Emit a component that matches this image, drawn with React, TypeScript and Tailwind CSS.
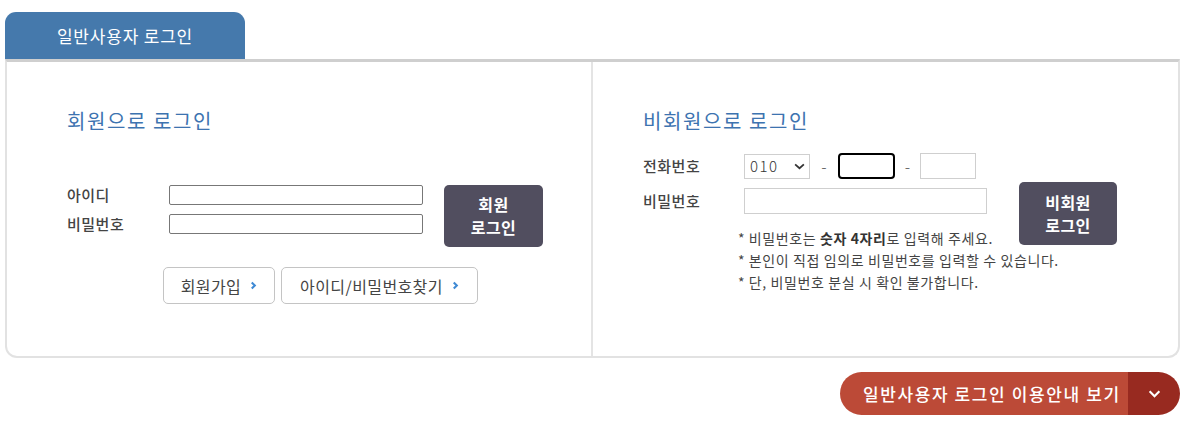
import { useState } from 'react';

const font = { fontFamily: '"Noto Sans CJK KR", "Noto Sans", sans-serif' };

function Chevron({ className }: { className?: string }) {
  return (
    <svg viewBox="0 0 8 10" className={className} fill="none" stroke="currentColor" strokeWidth="2.4">
      <path d="M2 1.5 L5.5 5 L2 8.5" />
    </svg>
  );
}

export default function App() {
  const [아이디, set아이디] = useState('');
  const [비번, set비번] = useState('');

  return (
    <div className="w-[1189px] h-[425px] bg-white pt-[12px] pl-[5px] text-[#333]" style={font}>
      <div className="w-[1175px]">
        {/* 탭 */}
        <div className="w-[240px] h-[47px] bg-[#4579ac] rounded-t-[11px] flex items-center justify-center text-white text-[17px] tracking-[0.8px]">
          일반사용자 로그인
        </div>

        <div className="flex h-[299px] border-t-[3px] border-t-[#cfcfcf] border-x-2 border-b-2 border-x-[#e2e2e2] border-b-[#e2e2e2] rounded-b-[12px]">
          {/* 회원 로그인 */}
          <div className="w-[586px] border-r-2 border-[#e4e4e4] pl-[60px] pt-[45px]">
            <h2 className="text-[20px] leading-[28px] text-[#3d73b0] tracking-[1.6px]">회원으로 로그인</h2>

            <div className="flex mt-[50px]">
              <div className="flex flex-col gap-[9px]">
                <div className="flex items-center h-[20px]">
                  <span className="w-[102px] text-[15px] font-medium tracking-[0.5px] text-[#444]">아이디</span>
                  <input value={아이디} onChange={(e) => set아이디(e.target.value)} className="w-[254px] h-[20px] border border-[#777] rounded-[2px] outline-none" />
                </div>
                <div className="flex items-center h-[20px]">
                  <span className="w-[102px] text-[15px] font-medium tracking-[0.5px] text-[#444]">비밀번호</span>
                  <input type="password" value={비번} onChange={(e) => set비번(e.target.value)} className="w-[254px] h-[20px] border border-[#777] rounded-[2px] outline-none" />
                </div>
              </div>
              <button className="ml-[21px] w-[99px] h-[62px] bg-[#514e5f] rounded-[5px] text-white text-[16px] font-bold leading-[23px] tracking-[0.5px]">
                회원<br />로그인
              </button>
            </div>

            <div className="flex gap-[6px] ml-[96px] mt-[20px]">
              <button className="w-[112px] h-[37px] border border-[#c4c4c4] rounded-[5px] flex items-center justify-center gap-[9px] text-[16px] tracking-[0.4px] text-[#444]">
                회원가입 <Chevron className="w-[7px] h-[9px] text-[#3f8ad4]" />
              </button>
              <button className="w-[197px] h-[37px] border border-[#c4c4c4] rounded-[5px] flex items-center justify-center gap-[9px] text-[16px] tracking-[0.4px] text-[#444]">
                아이디/비밀번호찾기 <Chevron className="w-[7px] h-[9px] text-[#3f8ad4]" />
              </button>
            </div>
          </div>

          {/* 비회원 로그인 */}
          <div className="flex-1 pl-[50px] pt-[45px]">
            <h2 className="text-[20px] leading-[28px] text-[#3d73b0] tracking-[1.6px]">비회원으로 로그인</h2>

            <div className="flex items-center mt-[18px] h-[26px]">
              <span className="w-[101px] text-[15px] font-medium tracking-[0.5px] text-[#444]">전화번호</span>
              <div className="w-[66px] h-[25px] border border-[#cfcfcf] flex items-center justify-between pl-[5px] pr-[4px] text-[15px] font-light text-[#333] tracking-[1.5px]">
                010
                <svg viewBox="0 0 12 8" className="w-[11px] h-[7px]" fill="none" stroke="#333" strokeWidth="2">
                  <path d="M1 1.5 L6 6 L11 1.5" />
                </svg>
              </div>
              <span className="w-[28px] text-center text-[#555] font-light">-</span>
              <input className="w-[57px] h-[26px] border-2 border-black rounded-[4px] outline-none" />
              <span className="w-[25px] text-center text-[#555] font-light">-</span>
              <input className="w-[56px] h-[26px] border border-[#cfcfcf] outline-none" />
            </div>

            <div className="flex items-start mt-[9px] h-[26px]">
              <span className="w-[101px] h-[26px] flex items-center text-[15px] font-medium tracking-[0.5px] text-[#444]">비밀번호</span>
              <input type="password" className="w-[243px] h-[26px] border border-[#cfcfcf] outline-none" />
              <button className="ml-[32px] -mt-[6px] w-[98px] h-[63px] bg-[#514e5f] rounded-[5px] text-white text-[16px] font-bold leading-[23px] tracking-[0.5px]">
                비회원<br />로그인
              </button>
            </div>

            <ul className="ml-[95px] mt-[13px] text-[14px] leading-[22px] tracking-[0.6px] text-[#444]">
              <li>* 비밀번호는 <b className="text-[#333]">숫자 4자리</b>로 입력해 주세요.</li>
              <li>* 본인이 직접 임의로 비밀번호를 입력할 수 있습니다.</li>
              <li>* 단, 비밀번호 분실 시 확인 불가합니다.</li>
            </ul>
          </div>
        </div>

        {/* 이용안내 */}
        <div className="flex justify-end mt-[14px]">
          <button className="flex h-[43px] rounded-full overflow-hidden text-white">
            <span className="w-[288px] bg-[#bc4a37] flex items-center pl-[23px] text-[17px] font-medium tracking-[1.6px]">
              일반사용자 로그인 이용안내 보기
            </span>
            <span className="w-[52px] bg-[#982a20] flex items-center justify-center">
              <svg viewBox="0 0 14 9" className="w-[13px] h-[8px]" fill="none" stroke="white" strokeWidth="2.4">
                <path d="M1.5 1.5 L7 7 L12.5 1.5" />
              </svg>
            </span>
          </button>
        </div>
      </div>
    </div>
  );
}
